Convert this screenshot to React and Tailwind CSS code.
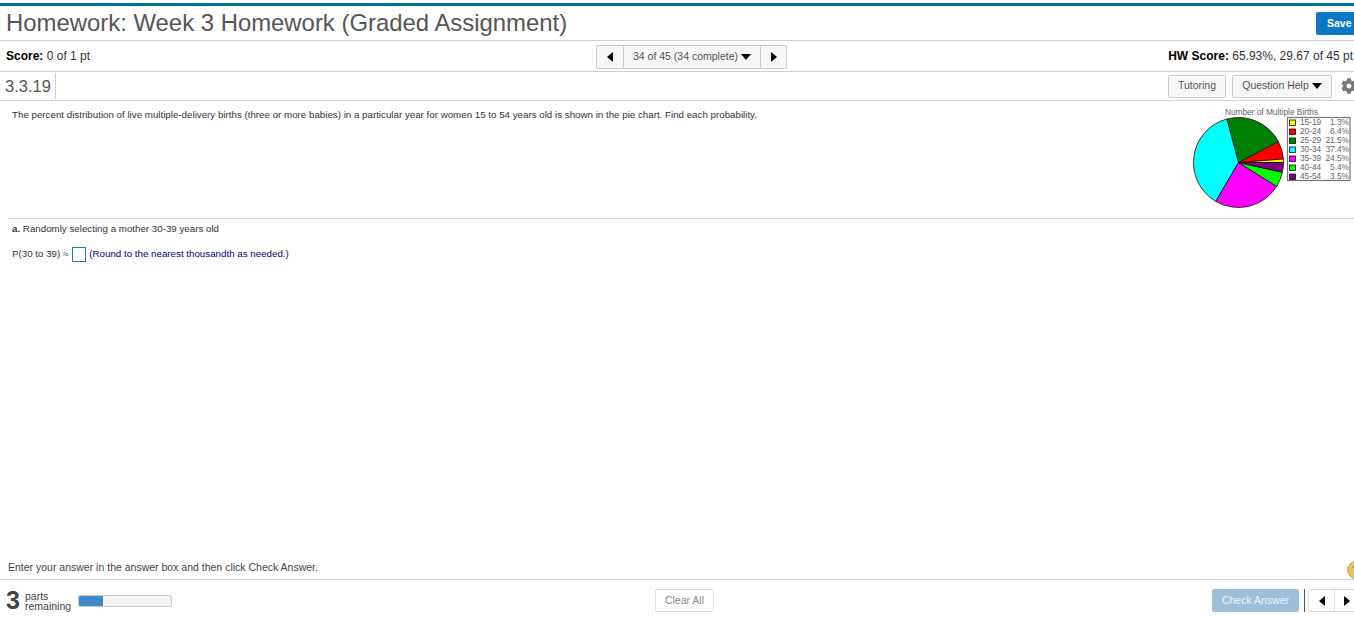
import { FaCog } from "react-icons/fa";

const font = { fontFamily: '"Liberation Sans", Arial, sans-serif' };

const legend = [
  { range: "15-19", pct: "1.3%", color: "#ffff00" },
  { range: "20-24", pct: "6.4%", color: "#ff0000" },
  { range: "25-29", pct: "21.5%", color: "#008000" },
  { range: "30-34", pct: "37.4%", color: "#00ffff" },
  { range: "35-39", pct: "24.5%", color: "#ff00ff" },
  { range: "40-44", pct: "5.4%", color: "#00ff00" },
  { range: "45-54", pct: "3.5%", color: "#800080" },
];

// slices run counterclockwise from due east, same as the original chart
function slicePath(cx, cy, r, from, to) {
  const a = (from / 100) * Math.PI * 2;
  const b = (to / 100) * Math.PI * 2;
  const x1 = cx + r * Math.cos(a);
  const y1 = cy - r * Math.sin(a);
  const x2 = cx + r * Math.cos(b);
  const y2 = cy - r * Math.sin(b);
  const large = to - from > 50 ? 1 : 0;
  return `M${cx} ${cy}L${x1} ${y1}A${r} ${r} 0 ${large} 0 ${x2} ${y2}Z`;
}

function PieChart() {
  let total = 0;
  return (
    <svg width="170" height="115" viewBox="0 0 170 115" className="shrink-0">
      <text x="87.5" y="14" textAnchor="middle" fontSize="8.3" fill="#666">
        Number of Multiple Births
      </text>
      {legend.map((s) => {
        const from = total;
        total += parseFloat(s.pct);
        return (
          <path
            key={s.range}
            d={slicePath(54.5, 61.5, 45, from, Math.min(total, 100))}
            fill={s.color}
            stroke="#111"
            strokeWidth="0.8"
          />
        );
      })}
      <rect x="103.5" y="16.5" width="62.5" height="63" fill="#fff" stroke="#777" strokeWidth="1.2" />
      {legend.map((s, i) => (
        <g key={s.range}>
          <rect x="105.5" y={19 + i * 9} width="6" height="5.5" fill={s.color} stroke="#111" strokeWidth="0.8" />
          <text x="116" y={24.2 + i * 9} fontSize="8.3" fill="#666">
            {s.range}
          </text>
          <text x="165" y={24.2 + i * 9} fontSize="8.3" fill="#666" textAnchor="end">
            {s.pct}
          </text>
        </g>
      ))}
    </svg>
  );
}

function ArrowLeft() {
  return <span className="w-0 h-0 border-y-[5px] border-y-transparent border-r-[6px] border-r-black" />;
}

function ArrowRight() {
  return <span className="w-0 h-0 border-y-[5px] border-y-transparent border-l-[6px] border-l-black" />;
}

function ArrowDown() {
  return <span className="w-0 h-0 border-x-[5px] border-x-transparent border-t-[6px] border-t-black" />;
}

export default function App() {
  return (
    <div
      style={font}
      className="w-[1354px] h-[618px] overflow-hidden bg-white flex flex-col pt-[3px] text-[#444]"
    >
      <div className="h-[3px] bg-[#007595]" />

      {/* Title */}
      <div className="h-[35px] shrink-0 flex items-center justify-between pl-[6px] border-b border-[#ccd0de]">
        <h1 className="text-[23.9px] leading-none text-[#555]">
          Homework: Week 3 Homework (Graded Assignment)
        </h1>
        <button className="w-[38px] h-[23px] mt-px pl-[11px] bg-[#0f77c8] text-white text-[10.5px] font-bold rounded-l-[2px] flex items-center">
          Save
        </button>
      </div>

      {/* Score and navigation */}
      <div className="h-[31px] shrink-0 flex items-center border-b border-[#ccd0de] text-[12px] text-[#333]">
        <div className="w-[596px] shrink-0 pl-[6px]">
          <span className="font-bold text-black">Score:</span> 0 of 1 pt
        </div>
        <div className="flex h-[24px] mt-px text-[#555]">
          <button className="w-[28px] flex items-center justify-center bg-[#f7f7f7] border border-[#ccc] rounded-l-[2px]">
            <ArrowLeft />
          </button>
          <button className="w-[138px] -ml-px flex items-center justify-center gap-[3px] text-[10.5px] bg-[#f7f7f7] border border-[#ccc]">
            34 of 45 (34 complete)
            <ArrowDown />
          </button>
          <button className="w-[27px] -ml-px flex items-center justify-center bg-[#f7f7f7] border border-[#ccc] rounded-r-[2px]">
            <ArrowRight />
          </button>
        </div>
        <div className="ml-auto pr-px whitespace-nowrap">
          <span className="font-bold text-black">HW Score:</span> 65.93%, 29.67 of 45 pt
        </div>
      </div>

      {/* Question id and help */}
      <div className="h-[29px] shrink-0 flex items-center border-b border-[#ccd0de]">
        <div className="h-[26px] w-[56px] pl-[5px] border-r border-[#ccd0de] text-[16.5px] leading-[26px] text-[#555]">
          3.3.19
        </div>
        <div className="ml-auto -mr-[3px] flex items-center">
          <button className="w-[58px] h-[23px] mr-[6px] bg-[#f7f7f7] border border-[#ccc] rounded-[2px] text-[10.5px] text-[#555]">
            Tutoring
          </button>
          <button className="w-[100px] h-[23px] mr-[9px] flex items-center justify-center gap-[3px] bg-[#f7f7f7] border border-[#ccc] rounded-[2px] text-[10.5px] text-[#555]">
            Question Help
            <ArrowDown />
          </button>
          <FaCog className="text-[#777] w-[16px] h-[16px] shrink-0" />
        </div>
      </div>

      {/* Stem */}
      <div className="h-[117px] shrink-0 flex justify-between pl-[12px]">
        <p className="pt-[8px] text-[9.75px] leading-[12px] text-[#333]">
          The percent distribution of live multiple-delivery births (three or more babies) in a particular year for women 15 to 54 years old is shown in the pie chart. Find each probability.
        </p>
        <PieChart />
      </div>

      {/* Part a */}
      <div className="ml-[8px] flex-1 border-t border-[#ccd0de] pl-[4px] text-[9.75px] text-[#333]">
        <p className="pt-[4px] leading-[12px]">
          <span className="font-bold">a.</span> Randomly selecting a mother 30-39 years old
        </p>
        <div className="mt-[12px] flex items-center h-[15px]">
          <span>P(30 to 39) ≈</span>
          <span className="ml-[4px] w-[14px] h-[15px] border border-[#1f7f9f]" />
          <span className="ml-[3px] text-[#00008b]">(Round to the nearest thousandth as needed.)</span>
        </div>
      </div>

      {/* Instructions */}
      <div className="h-[25px] shrink-0 relative flex items-center pl-[8px] pt-[2px] border-b border-[#ccd0de] text-[10.5px] text-[#444]">
        Enter your answer in the answer box and then click Check Answer.
        <span className="absolute left-[1347px] top-[6px] w-[18px] h-[18px] rounded-full bg-[#e5c15f] border border-[#d7a93c] flex items-center justify-center text-[12px] font-bold text-[#555]">
          ?
        </span>
      </div>

      {/* Bottom bar */}
      <div className="h-[38px] shrink-0 flex items-center pt-[3px]">
        <div className="w-[655px] shrink-0 flex items-center pl-[6px]">
          <span className="w-[19px] text-[25px] font-bold leading-none text-[#444]">3</span>
          <span className="w-[53px] text-[10.5px] leading-[10px] text-[#444]">
            parts
            <br />
            remaining
          </span>
          <div className="w-[94px] h-[12px] bg-[#f3f3f3] border border-[#ccc] rounded-[2px] overflow-hidden">
            <div className="w-[24px] h-full bg-[#4088c8]" />
          </div>
        </div>
        <button className="w-[59px] h-[23px] border border-[#ddd] rounded-[2px] text-[10.5px] text-[#888]">
          Clear All
        </button>
        <div className="ml-auto -mr-[6px] flex items-center h-[23px] w-[148px] shrink-0">
          <button className="w-[87px] h-full bg-[#9cc0dc] rounded-[2px] text-[10.5px] text-[#e8f1f8]">
            Check Answer
          </button>
          <span className="ml-[5px] w-px h-full bg-[#555]" />
          <button className="ml-[3px] w-[27px] h-full shrink-0 flex items-center justify-center border border-[#ddd] rounded-l-[2px]">
            <ArrowLeft />
          </button>
          <button className="-ml-px w-[26px] h-full shrink-0 flex items-center justify-center border border-[#ddd]">
            <ArrowRight />
          </button>
        </div>
      </div>
    </div>
  );
}
